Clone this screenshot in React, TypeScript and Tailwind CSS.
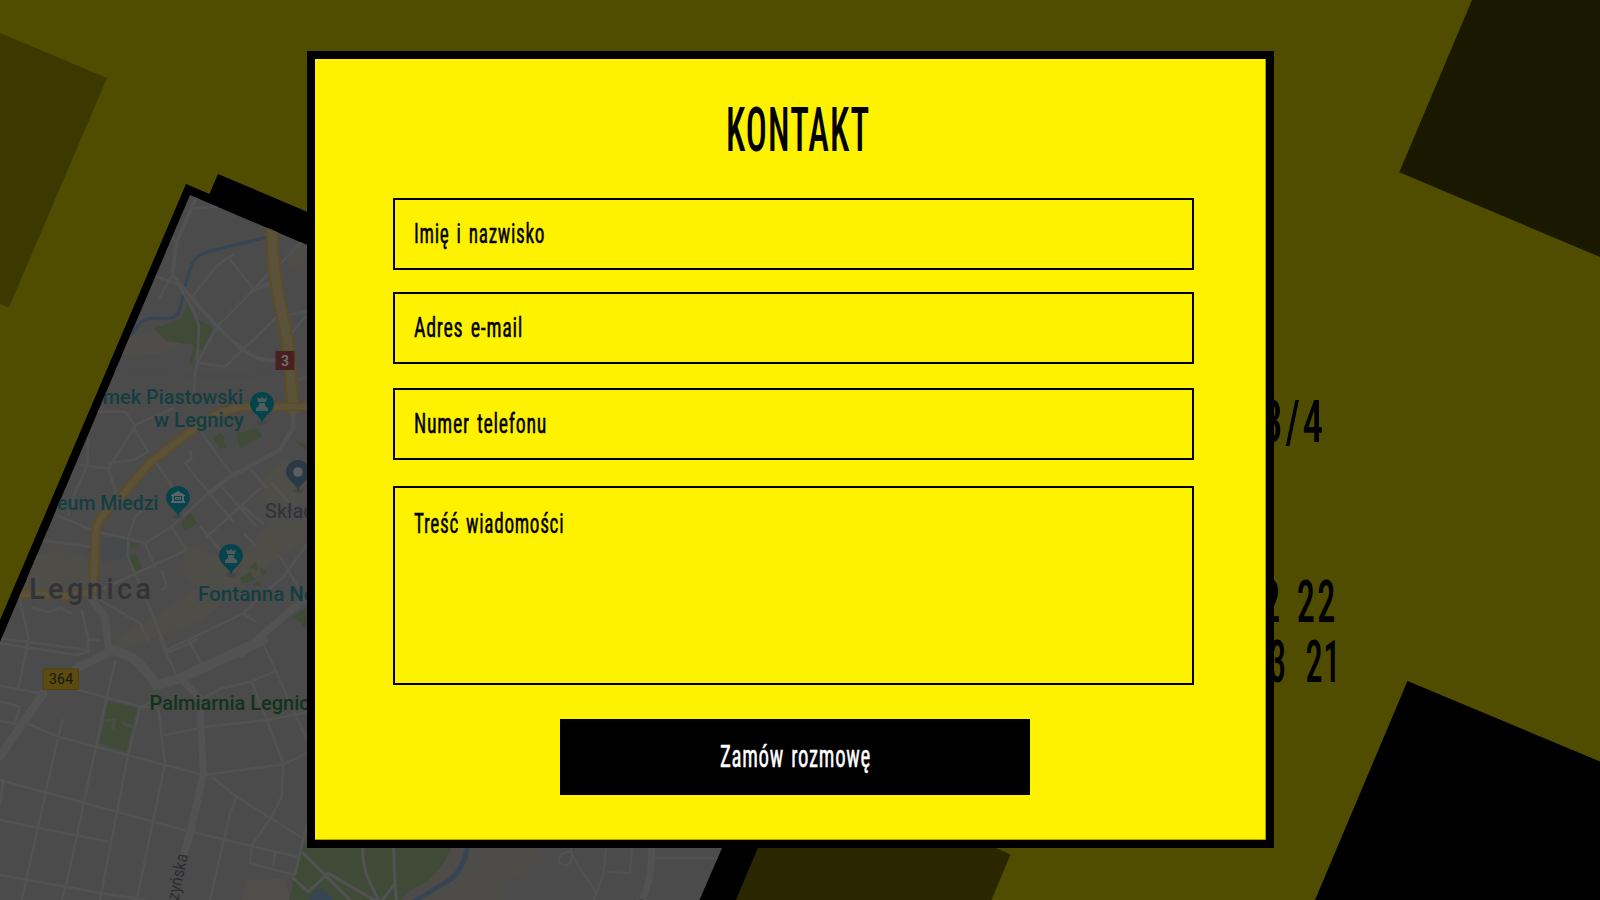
import { useLayoutEffect, useRef, useState } from 'react';

type FitTextProps = { text: string; width: number; className?: string };

/* Condenses a line of text horizontally to the given width. */
function FitText({ text, width, className = '' }: FitTextProps) {
  const ref = useRef<HTMLSpanElement>(null);
  const [scale, setScale] = useState(0.5);
  useLayoutEffect(() => {
    if (ref.current) setScale(width / ref.current.offsetWidth);
  }, [text, width]);
  return (
    <span className="block shrink-0" style={{ width }}>
      <span
        ref={ref}
        className={`inline-block origin-left whitespace-pre leading-none ${className}`}
        style={{ transform: `scaleX(${scale})` }}
      >
        {text}
      </span>
    </span>
  );
}

const road = '#525252';

function Pin({ x, y, color, kind }: { x: number; y: number; color: string; kind: 'tower' | 'museum' | 'dot' }) {
  return (
    <g transform={`translate(${x} ${y})`}>
      <ellipse cx="0" cy="19" rx="5" ry="2" fill="#3f3f3f" opacity=".5" />
      <path d="M0 19C-1 12-12 8-12 0a12 12 0 0 1 24 0C12 8 1 12 0 19Z" fill={color} />
      {kind === 'tower' && (
        <path d="M-5-7 -2-5 0-7 2-5 5-7 4-2H-4ZM-3-1H3V2L6 4V7H-6V4L-3 2Z" fill="#4f5c5d" />
      )}
      {kind === 'museum' && (
        <path
          fillRule="evenodd"
          d="M0-7 7-3v1h-1v5h1v2H-7V3h1v-5h-1v-1ZM-4-2v5h8v-5ZM-3-1h6v3h-6Zm1.200 1v1.200h1.200V0Zm2.400 0v1.200h1.200V0Z"
          fill="#5b6465"
        />
      )}
      {kind === 'dot' && <circle r="4.800" fill="#5b5e60" />}
    </g>
  );
}

function Backdrop() {
  return (
    <svg className="absolute inset-0" width="1600" height="900" viewBox="0 0 1600 900" aria-hidden="true">
      <defs>
        <clipPath id="map-area">
          <path d="M190 195 820 464V617L722 848 699.500 900H0V642Z" />
        </clipPath>
      </defs>
      <rect width="1600" height="900" fill="#514d00" />
      <path d="M0 33 107 78 9 307.500 0 304Z" fill="#3c3900" />
      <path d="M1472 0 1399.300 172.300 1600 257V0Z" fill="#1b1800" />
      <path d="M1407.500 681 1600 761.500V900H1315Z" fill="#000" />
      <path d="M758 848 736 900H991.500L1010.500 854.500 996 848Z" fill="#2a2600" />
      <path d="M218 174 900 463 758 848 736 900H600L205 204Z" fill="#000" />
      <path d="M186 184 894 486 740 848 700 900H0V620Z" fill="#000" />
      <path d="M190 195 820 464V617L722 848 699.500 900H0V642Z" fill="#4b4b4b" />

      <g clipPath="url(#map-area)" fill="none" strokeLinecap="round" strokeLinejoin="round">
        <g transform="translate(0 160) scale(.33333)">
          <path d="M380 530c60-30 150-10 155 20s-80 40-180 35Z" fill="#4e4d49" />
          <path d="M855 270 930 240V300L870 325Z" fill="#4e4d48" />
          <path d="M462 506 542 476 563 432 580 470 640 503 606 570 580 555 500 543Z" fill="#3f4b37" />
          <path d="M586 558 574 608" stroke="#3f4b37" strokeWidth="9" />
          <path d="M350 626C450 645 560 640 640 646S820 640 930 600" stroke="#484a4b" strokeWidth="20" />
          <path d="M390 528C425 480 430 474 470 475S535 480 543 435 556 375 568 335 590 285 630 273L800 232" stroke="#354554" strokeWidth="9" />
          <g stroke={road} strokeWidth="8">
            <path d="M590 110 530 245 517 345 585 425 652 500 725 568 775 595 830 604" strokeWidth="11" />
            <path d="M585 145 650 140M530 245 518 235M470 350 535 373M517 345 478 414M535 373 585 460 597 500 592 605 585 640 582 700" />
            <path d="M570 418 650 318 685 293 698 286M685 293 762 388 810 375M762 388 652 500 592 608 675 620 730 568 830 470 925 455M835 318 920 230M800 345 762 388" />
            <path d="M762 388 810 370" strokeWidth="15" />
            <path d="M870 525 925 460M885 660 930 650M715 552 730 568" />
          </g>
          <path d="M815 205C820 330 830 400 846 460S870 600 880 760" stroke="#5e4c23" strokeWidth="38" strokeLinecap="butt" />
          <path d="M815 205C820 330 830 400 846 460S870 600 880 760" stroke="#5b523b" strokeWidth="27" strokeLinecap="butt" />
        </g>

        <g transform="translate(0 400) scale(.33333)">
          <path d="M95 465 180 452 260 470 272 575 70 590Z" fill="#4f4d47" />
          <path d="M304 410 382 418 378 470 300 490Z" fill="#474a4b" />
          <path d="M780 250 850 175 930 210V410L840 470 720 570 600 665 350 750 345 720 480 640 590 560 545 515 570 435 700 490 810 370Z" fill="#4f4d47" />
          <path d="M710 100 775 85 785 110 720 145ZM640 115 660 100 675 112 670 130 680 140 660 147ZM543 370 570 338 592 370 555 392ZM387 424 415 435 395 447ZM390 470 407 460 427 505 403 520ZM880 120 925 135V155ZM720 535 750 515 765 540 730 550ZM750 500 765 485 775 512ZM780 500 800 520 785 525ZM755 555 775 545 790 560ZM875 650 920 625V690L900 665Z" fill="#3f4b37" />
          <g stroke={road} strokeWidth="8">
            <path d="M290 35 375 35 405 75 520 25M400 82 445 155M600 380 670 460M470 190 540 295M405 80 325 205 240 195M445 155 400 180 325 190M265 115 262 195 225 280 205 345M325 205 350 285M170 345 290 397 385 415 435 430 515 380 625 280 690 230 840 150 880 80 875 40" />
            <path d="M100 418 270 440M600 90 670 190 705 230M670 265 765 375M570 155 575 175 555 190 620 270 700 365M385 415 383 470 440 600 500 750M435 430 465 500M515 380 560 450 300 570M385 410 405 350 440 320M780 265 620 410M715 310 790 370M735 405 765 435M750 205 800 265M815 250 870 310M485 510 500 560 485 570" />
            <path d="M625 280 690 230 840 150 880 80 878 30" strokeWidth="14" />
            <path d="M920 435 850 530 780 590 730 640 500 750M730 640 765 665M840 470 900 570M445 720 420 670 250 570M0 715 265 750M60 600 85 710 82 750M100 625 145 635 180 625 215 640M245 630 265 720 260 750M265 718 295 720" />
            <path d="M275 600 315 650 325 740" strokeWidth="22" />
            <path d="M930 585 850 650 725 760" strokeWidth="22" />
          </g>
          <path d="M930 20H760C700 18 650 38 600 72L460 180C420 215 400 250 350 305 285 360 286 380 285 440L280 570C240 592 190 590 50 580" stroke="#5e4c23" strokeWidth="28" />
          <path d="M930 20H760C700 18 650 38 600 72L460 180C420 215 400 250 350 305 285 360 286 380 285 440L280 570C240 592 190 590 50 580" stroke="#5b523b" strokeWidth="17" />
        </g>

        <g transform="translate(0 640) scale(.33333)">
          <path d="M325 183 411 205 380 335 300 310Z" fill="#3f4b37" />
          <path d="M318 242 345 240 338 265M370 250 395 260" stroke="#4b4b4b" strokeWidth="9" />
          <path d="M740 720 860 715 870 790H720Z" fill="#4f4e4a" />
          <path d="M905 610 1360 610C1340 680 1320 710 1270 730S1220 770 1190 790H865Z" fill="#3f4b37" />
          <path d="M1360 610H1620C1630 680 1580 720 1500 720L1500 800H1190C1270 730 1320 710 1360 610Z" fill="#4d4c49" />
          <path d="M960 742 1000 780 960 810 925 775Z" fill="#354554" />
          <path d="M1405 610C1395 670 1375 710 1325 735L1240 785" stroke="#354554" strokeWidth="14" />
          <g stroke={road} strokeWidth="8">
            <path d="M340 30C420 55 430 85 470 135L540 115 790 0" strokeWidth="30" />
            <path d="M340 30 230 85M0 350 130 160" strokeWidth="26" />
            <path d="M545 120 600 175 605 300 610 400 575 560 550 650" strokeWidth="21" />
            <path d="M0 10 230 45 265 35 265 0M85 0 55 145M0 138 125 160M0 185 60 200 45 250M0 243 60 253M235 150 425 200 475 205 495 370 410 780M420 205 450 185 475 205M345 65 290 310 200 730 185 780M420 205 385 340 300 780M188 240 175 290 65 780M80 250 175 290 495 375 610 405 850 373 930 335M0 420 240 485 560 572 890 650M0 540 120 565 325 605M10 420 0 490M0 705 295 758 430 780" />
            <path d="M480 0 530 105M500 40 590 0M565 0 605 70M785 0 930 320M820 95 755 125 665 145 600 180M755 125 800 240 850 370 845 470 815 530 755 615 750 670 885 705M495 285 620 260 800 240 930 215M640 415 710 470 900 590M710 470 690 520 630 780M930 510 885 705M825 640 820 675" />
            <path d="M610 400 575 560 550 650" strokeWidth="23" />
            <path d="M880 715 925 755 985 700 1140 790M910 640 1060 790M1090 610C1080 680 1110 730 1140 790M1180 610 1185 730 1190 790M1140 790 1185 730" strokeWidth="9" />
            <path d="M1715 610C1700 650 1770 720 1790 760L1770 800M1820 610 1810 700 1790 760M1710 635C1665 640 1670 675 1695 675S1710 655 1715 645M1820 695 1890 700 1897 610M1960 655H2180" strokeWidth="6" />
            <path d="M1955 610C1955 710 1950 720 1920 800" strokeWidth="20" />
          </g>
          <path d="M1915 777 1940 781 1935 785Z" fill="#292929" />
        </g>
        <rect x="275.500" y="351" width="19" height="19" fill="#492020" />
        <rect x="43.500" y="669" width="35" height="20.500" fill="#5b4b10" stroke="#54400b" />
      </g>

      <g clipPath="url(#map-area)" fontFamily="Roboto, sans-serif" fontSize="20" strokeLinejoin="round" paintOrder="stroke">
        <text x="285" y="366" fontSize="14" fontWeight="500" fill="#777171" textAnchor="middle">3</text>
        <text x="61" y="684" fontSize="14" fill="#17160e" textAnchor="middle" textLength="24">364</text>
        <g fill="#133e41" stroke="#4c4c4c" strokeWidth="2" fontWeight="500">
          <text x="243" y="403.500" textAnchor="end" textLength="163" lengthAdjust="spacingAndGlyphs">Zamek Piastowski</text>
          <text x="154" y="427" textLength="90" lengthAdjust="spacingAndGlyphs">w Legnicy</text>
          <text x="158.500" y="509.500" textAnchor="end" textLength="139" lengthAdjust="spacingAndGlyphs">Muzeum Miedzi</text>
          <text x="198" y="600.500" textLength="117" lengthAdjust="spacingAndGlyphs">Fontanna Ne</text>
        </g>
        <text x="265" y="517.500" fill="#2e3237" stroke="#4c4c4c" strokeWidth="2">Skład</text>
        <text x="149.500" y="709.500" fontWeight="500" fill="#10331a" stroke="#4c4c4c" strokeWidth="2" textLength="171" lengthAdjust="spacingAndGlyphs">Palmiarnia Legnica</text>
        <text x="29" y="599" fontSize="29" fontWeight="500" fill="#333337" stroke="#4c4c4c" strokeWidth="2" textLength="122">Legnica</text>
        <text transform="translate(188 855) rotate(-78)" fontSize="17" fill="#2a2c2e" textAnchor="end" textLength="47" lengthAdjust="spacingAndGlyphs">zyńska</text>
      </g>
      <g clipPath="url(#map-area)">
        <Pin x={262} y={404} color="#04444a" kind="tower" />
        <Pin x={178} y={498} color="#04444a" kind="museum" />
        <Pin x={231} y={556} color="#04444a" kind="tower" />
        <Pin x={298} y={472} color="#2a3944" kind="dot" />
      </g>
    </svg>
  );
}

type FieldProps = { label: string; labelWidth: number; className: string };

function Field({ label, labelWidth, className }: FieldProps) {
  return (
    <div className={`flex border-2 border-black pl-[18.5px] ${className}`}>
      <FitText text={label} width={labelWidth} className="text-[28px] tracking-[1px] [word-spacing:3px] [-webkit-text-stroke:0.5px_currentColor]" />
    </div>
  );
}

export default function App() {
  return (
    <main className="relative h-[900px] w-[1600px] overflow-hidden bg-[#514d00] font-['Roboto_Condensed','Roboto',sans-serif] text-black">
      <Backdrop />
      <div className="absolute left-[1262px] top-[392px]">
        <FitText text="3/4" width={64} className="text-[60px] font-medium tracking-[4px]" />
      </div>
      <div className="absolute left-[1262px] top-[572px]">
        <FitText text="2 22" width={76} className="text-[60px] font-medium tracking-[4px] [word-spacing:6px]" />
      </div>
      <div className="absolute left-[1269px] top-[632px]">
        <FitText text="3 21" width={72} className="text-[60px] font-medium tracking-[1px] [word-spacing:18px]" />
      </div>

      <section className="relative ml-[307px] mt-[51px] flex h-[797px] w-[967px] flex-col border-8 border-black bg-[#fff200] pl-[78px] pt-[41px] shadow-[inset_-1px_-1px_0_#aaa100]">
        <h1 className="flex h-[98px] w-[801px] justify-center pl-2">
          <FitText text="KONTAKT" width={144} className="text-[61px] font-medium tracking-[2px]" />
        </h1>
        <form className="flex w-[801px] flex-col">
          <Field label="Imię i nazwisko" labelWidth={131} className="h-[72px] items-center pt-0.5" />
          <Field label="Adres e-mail" labelWidth={109} className="mt-[22px] h-[72px] items-center pt-0.5" />
          <Field label="Numer telefonu" labelWidth={133} className="mt-6 h-[72px] items-center pt-0.5" />
          <Field label="Treść wiadomości" labelWidth={150} className="mt-[26px] h-[199px] items-start pt-[22px]" />
          <button type="button" className="ml-[167px] mt-[34px] flex h-[76px] w-[470px] items-center justify-center bg-black text-left text-white">
            <FitText text="Zamów rozmowę" width={151} className="text-[31px] tracking-[1px] [word-spacing:3px] [-webkit-text-stroke:0.5px_currentColor]" />
          </button>
        </form>
      </section>
    </main>
  );
}
